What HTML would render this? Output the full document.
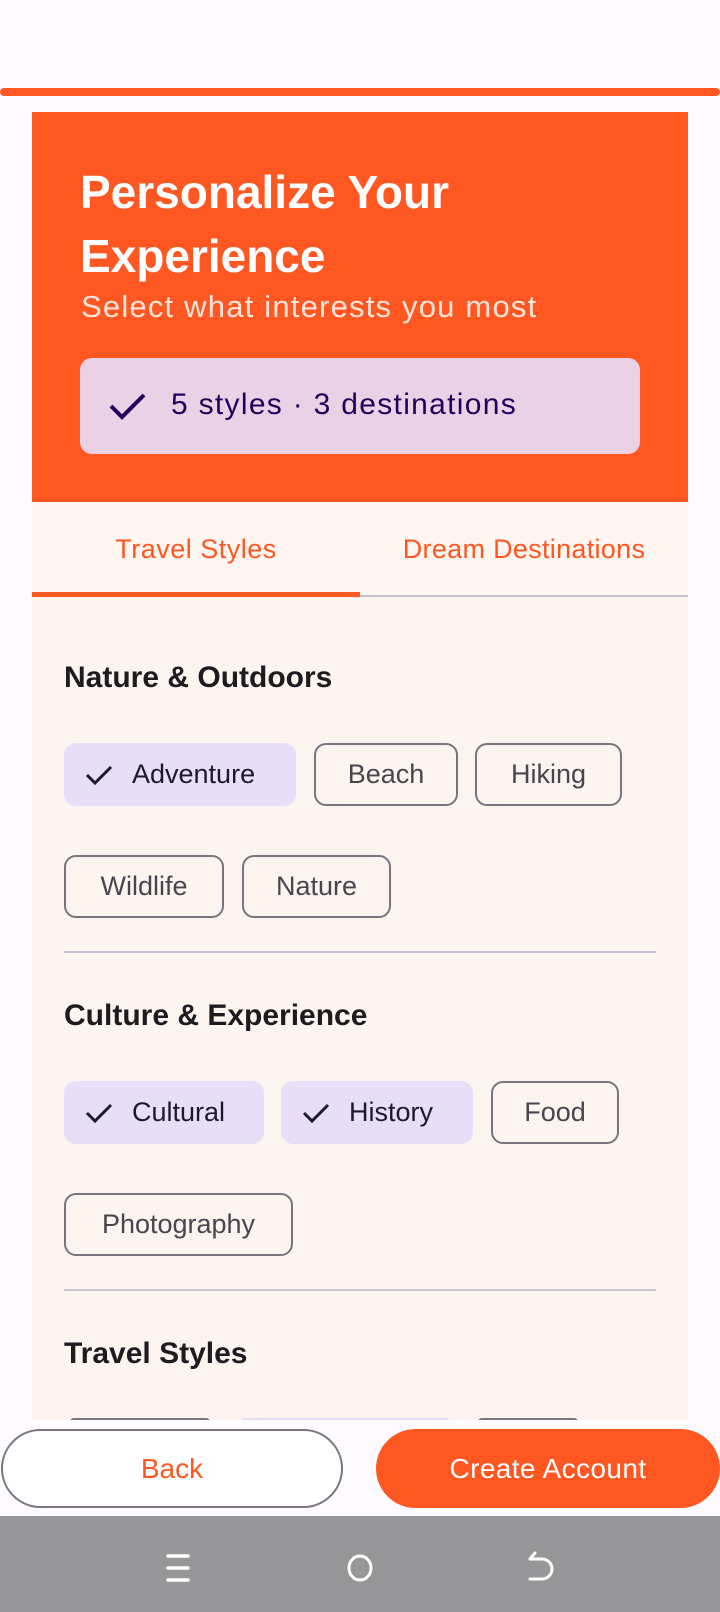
<!DOCTYPE html>
<html><head><meta charset="utf-8"><style>
*{margin:0;padding:0;box-sizing:border-box}
body{width:720px;height:1612px;background:#fdfbff;font-family:"Liberation Sans",sans-serif;position:relative;overflow:hidden}
.a{position:absolute}
.chip{position:absolute;height:63px;border:2px solid #79747e;border-radius:12px;color:#49454f;font-size:27px;display:flex;align-items:center;justify-content:center}
.chip.s{border:none;background:#e8def8;color:#1d192b;justify-content:flex-start;padding-left:20px}
.chip.s svg{margin-right:18px}
.h{position:absolute;left:64px;font-size:30px;font-weight:bold;color:#1d1b20}
.div{position:absolute;left:64px;width:592px;height:2px;background:#cac4d0}
</style></head><body>
<div class="a" style="left:0;top:88px;width:720px;height:8px;background:#ff5722;border-radius:4px"></div>
<div class="a" style="left:32px;top:112px;width:656px;height:390px;background:#ff5722"></div>
<div class="a" style="left:80px;top:160px;color:#fff;font-size:46px;font-weight:bold;line-height:64px">Personalize Your<br>Experience</div>
<div class="a" style="left:81px;top:289px;color:#ffe4da;font-size:31px;letter-spacing:1.2px">Select what interests you most</div>
<div class="a" style="left:80px;top:358px;width:560px;height:96px;background:#ead1e6;border-radius:12px"></div>
<svg class="a" style="left:108px;top:390px" width="40" height="32" viewBox="0 0 40 32"><path d="M3 16 L14 27 L36 5" stroke="#21005d" stroke-width="4" fill="none"/></svg>
<div class="a" style="left:171px;top:388px;color:#21005d;font-size:30px;letter-spacing:1.3px">5 styles · 3 destinations</div>
<div class="a" style="left:32px;top:502px;width:656px;height:918px;background:#fdf3ef"></div>
<div class="a" style="left:32px;top:502px;width:656px;height:95px;background:#fff6f2"></div>
<div class="a" style="left:32px;top:534px;width:328px;text-align:center;color:#ff5722;font-size:27px;letter-spacing:0.5px">Travel Styles</div>
<div class="a" style="left:360px;top:534px;width:328px;text-align:center;color:#ff5722;font-size:27px;letter-spacing:0.3px">Dream Destinations</div>
<div class="a" style="left:32px;top:595px;width:656px;height:2px;background:#cac4d0"></div>
<div class="a" style="left:32px;top:592px;width:328px;height:5px;background:#ff5722"></div>

<div class="h" style="top:661px">Nature &amp; Outdoors</div>
<div class="chip s" style="left:64px;top:743px;width:232px"><svg width="30" height="24" viewBox="0 0 30 24"><path d="M3 12 L11 20 L27 4" stroke="#1d192b" stroke-width="3" fill="none"/></svg>Adventure</div>
<div class="chip" style="left:314px;top:743px;width:144px">Beach</div>
<div class="chip" style="left:475px;top:743px;width:147px">Hiking</div>
<div class="chip" style="left:64px;top:855px;width:160px">Wildlife</div>
<div class="chip" style="left:242px;top:855px;width:149px">Nature</div>
<div class="div" style="top:951px"></div>

<div class="h" style="top:999px">Culture &amp; Experience</div>
<div class="chip s" style="left:64px;top:1081px;width:200px"><svg width="30" height="24" viewBox="0 0 30 24"><path d="M3 12 L11 20 L27 4" stroke="#1d192b" stroke-width="3" fill="none"/></svg>Cultural</div>
<div class="chip s" style="left:281px;top:1081px;width:192px"><svg width="30" height="24" viewBox="0 0 30 24"><path d="M3 12 L11 20 L27 4" stroke="#1d192b" stroke-width="3" fill="none"/></svg>History</div>
<div class="chip" style="left:491px;top:1081px;width:128px">Food</div>
<div class="chip" style="left:64px;top:1193px;width:229px">Photography</div>
<div class="div" style="top:1289px"></div>

<div class="h" style="top:1337px">Travel Styles</div>
<div class="a" style="left:70px;top:1418px;width:140px;height:4px;border-top:2px solid #79747e;border-radius:12px 12px 0 0"></div>
<div class="a" style="left:240px;top:1418px;width:210px;height:4px;background:#e8def8;border-radius:12px 12px 0 0"></div>
<div class="a" style="left:478px;top:1418px;width:100px;height:4px;border-top:2px solid #79747e;border-radius:12px 12px 0 0"></div>
<div class="a" style="left:0;top:1420px;width:720px;height:96px;background:#fdfbff"></div>

<div class="a" style="left:1px;top:1429px;width:342px;height:79px;border:2px solid #79747e;border-radius:40px;color:#ff5722;font-size:28px;display:flex;align-items:center;justify-content:center;background:#fff">Back</div>
<div class="a" style="left:376px;top:1429px;width:344px;height:79px;background:#ff5722;border-radius:40px;color:#fff;font-size:28px;letter-spacing:0.4px;display:flex;align-items:center;justify-content:center">Create Account</div>

<div class="a" style="left:0;top:1516px;width:720px;height:96px;background:#979698"></div>
<svg class="a" style="left:164px;top:1550px" width="30" height="36" viewBox="0 0 30 36"><path d="M4 6H24M4 18H24M4 30H24" stroke="#fff" stroke-width="3.5" stroke-linecap="round"/></svg>
<svg class="a" style="left:344px;top:1552px" width="32" height="32" viewBox="0 0 32 32"><ellipse cx="16" cy="16" rx="11" ry="12" stroke="#fff" stroke-width="3" fill="none"/></svg>
<svg class="a" style="left:524px;top:1550px" width="34" height="36" viewBox="0 0 34 36"><path d="M6 9H18A8 8 0 0 1 18 29H6M6 9L11 3" stroke="#fff" stroke-width="3" fill="none" stroke-linecap="round"/></svg>
</body></html>
